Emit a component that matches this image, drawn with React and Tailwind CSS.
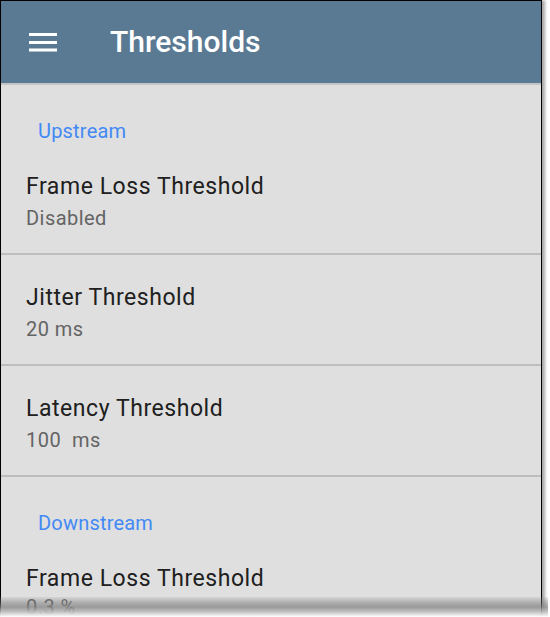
import React from "react";

function Item({ title, value, tight }) {
  return (
    <div className="pl-[25px] pt-[29px] pb-[18px]">
      <div className="text-[23px] leading-[28px] tracking-[0.55px] text-[#202020]">{title}</div>
      <div
        className={
          tight
            ? "text-[20px] leading-[28px] tracking-[0.45px] text-[#646464] whitespace-pre"
            : "text-[20px] leading-[34px] tracking-[0.45px] text-[#646464] whitespace-pre"
        }
      >
        {value}
      </div>
    </div>
  );
}

function Divider() {
  return <div className="h-[2px] bg-[#bdbdbd]" />;
}

function Section({ label }) {
  return (
    <div className="pl-[37px] pt-[36px] pb-[3px] text-[20px] leading-[20px] tracking-[0.2px] text-[#4389f5]">
      {label}
    </div>
  );
}

export default function App() {
  return (
    <div
      className="relative w-[550px] h-[617px] bg-white overflow-hidden"
      style={{ fontFamily: "Roboto, 'Noto Sans', sans-serif" }}
    >
      <div className="w-[542px] h-[617px] border-l border-t border-r border-black bg-[#dfdfdf] overflow-hidden shadow-[3px_0_3px_rgba(0,0,0,0.35)]">
        <div className="h-[82px] bg-[#5a7a94] flex items-center">
          <svg width="28" height="19" viewBox="0 0 28 19" className="ml-[28px]">
            <rect x="0" y="0" width="28" height="3" fill="#ffffff" />
            <rect x="0" y="8" width="28" height="3" fill="#ffffff" />
            <rect x="0" y="15.5" width="28" height="3" fill="#ffffff" />
          </svg>
          <div className="ml-[53px] text-[30px] font-medium text-white leading-none">Thresholds</div>
        </div>
        <div className="h-[2px] bg-[#c4c4c4]" />
        <Section label="Upstream" />
        <Item title="Frame Loss Threshold" value="Disabled" />
        <Divider />
        <Item title="Jitter Threshold" value="20 ms" />
        <Divider />
        <Item title="Latency Threshold" value="100  ms" />
        <Divider />
        <Section label="Downstream" />
        <Item title="Frame Loss Threshold" value="0.3 %" tight />
      </div>
      <div className="absolute left-0 top-[597px] w-[548px] h-[20px] bg-[linear-gradient(to_bottom,rgba(150,150,150,0.15)_0%,rgba(120,120,120,0.5)_30%,rgba(130,130,130,0.75)_50%,rgba(185,185,185,0.9)_72%,#ffffff_100%)]" />
    </div>
  );
}
